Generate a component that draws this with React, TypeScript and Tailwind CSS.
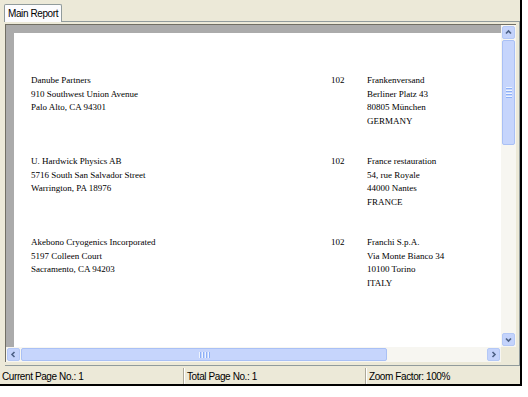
import React from "react";

type Entry = { left: string[]; num: string; right: string[] };

const entries: Entry[] = [
  {
    left: ["Danube Partners", "910 Southwest Union Avenue", "Palo Alto, CA  94301"],
    num: "102",
    right: ["Frankenversand", "Berliner Platz 43", "80805 München", "GERMANY"],
  },
  {
    left: ["U. Hardwick Physics AB", "5716 South San Salvador Street", "Warrington, PA  18976"],
    num: "102",
    right: ["France restauration", "54, rue Royale", "44000 Nantes", "FRANCE"],
  },
  {
    left: ["Akebono Cryogenics Incorporated", "5197 Colleen Court", "Sacramento, CA  94203"],
    num: "102",
    right: ["Franchi S.p.A.", "Via Monte Bianco 34", "10100 Torino", "ITALY"],
  },
];

function Arrow({ dir }: { dir: "up" | "down" | "left" | "right" }) {
  const pts = {
    up: "3,6.5 5.5,4 8,6.5",
    down: "3,4.5 5.5,7 8,4.5",
    left: "6.5,3 4,5.5 6.5,8",
    right: "4.5,3 7,5.5 4.5,8",
  }[dir];
  return (
    <div className="w-[13px] h-[13px] m-[1px] rounded-[2px] bg-[#C4D3FB] border border-[#B4C8F6] flex items-center justify-center">
      <svg width="11" height="11" viewBox="0 0 11 11">
        <polyline points={pts} fill="none" stroke="#4D6185" strokeWidth="1.6" />
      </svg>
    </div>
  );
}

function Grip({ vertical }: { vertical: boolean }) {
  return (
    <div className={vertical ? "flex flex-col gap-[1px]" : "flex gap-[1px]"}>
      {[0, 1, 2, 3].map((i) => (
        <div
          key={i}
          className={
            vertical
              ? "w-[6px] h-[1px] bg-[#EEF4FE] border-b border-[#8CB0F8] box-content"
              : "h-[6px] w-[1px] bg-[#EEF4FE] border-r border-[#8CB0F8] box-content"
          }
        />
      ))}
    </div>
  );
}

export default function App() {
  return (
    <div className="w-[528px] h-[397px] bg-white">
      <div className="w-[522px] h-[386px] bg-[#ECE9D8] border-r-2 border-b-2 border-black flex flex-col font-['Liberation_Sans',sans-serif] text-[10px] tracking-[-0.4px] text-black">
        {/* tab strip */}
        <div className="h-[21px] flex items-end pl-[4px] relative z-10">
          <div className="h-[18px] -mb-[1px] px-[3px] bg-[#FCFCFE] border border-b-0 border-[#919B9C] rounded-t-[2px] flex items-center">
            Main Report
          </div>
        </div>

        {/* tab page */}
        <div className="ml-[5px] w-[515px] border-t border-r border-b border-[#919B9C] pt-[2px] pb-[3px]">
          <div className="w-[511px] h-[338px] border-l border-t border-[#716F64] flex flex-col">
            <div className="flex h-[322px]">
              {/* report canvas */}
              <div className="w-[495px] h-[322px] bg-[#ABABAB] pl-[8px] pt-[8px] overflow-hidden">
                <div className="w-[600px] h-[420px] bg-white pl-[17px] pt-[41px] font-['Liberation_Serif',serif] text-[9px] leading-[13.5px] tracking-normal">
                  {entries.map((e, i) => (
                    <div key={i} className="flex h-[54px] mb-[27px]">
                      <div className="w-[300px]">
                        {e.left.map((l) => (
                          <div key={l} className="whitespace-nowrap">{l}</div>
                        ))}
                      </div>
                      <div className="w-[36px]">{e.num}</div>
                      <div>
                        {e.right.map((l) => (
                          <div key={l} className="whitespace-nowrap">{l}</div>
                        ))}
                      </div>
                    </div>
                  ))}
                </div>
              </div>

              {/* vertical scrollbar */}
              <div className="w-[15px] h-[322px] bg-[#F7F6F1] flex flex-col">
                <Arrow dir="up" />
                <div className="flex-1">
                  <div className="w-[13px] h-[105px] mx-[1px] rounded-[2px] bg-[#C6D5FC] border border-[#A9C0F5] flex items-center justify-center">
                    <Grip vertical />
                  </div>
                </div>
                <Arrow dir="down" />
              </div>
            </div>

            <div className="flex h-[15px]">
              {/* horizontal scrollbar */}
              <div className="w-[495px] h-[15px] bg-[#F7F6F1] flex">
                <Arrow dir="left" />
                <div className="flex-1">
                  <div className="w-[366px] h-[13px] my-[1px] rounded-[2px] bg-[#C6D5FC] border border-[#A9C0F5] flex items-center justify-center">
                    <Grip vertical={false} />
                  </div>
                </div>
                <Arrow dir="right" />
              </div>
              <div className="w-[15px] h-[15px] bg-[#ECE9D8]" />
            </div>
          </div>
        </div>

        {/* status bar */}
        <div className="h-[18px] flex items-center pt-[2px]">
          <div className="w-[183px] pl-[2px]">Current Page No.: 1</div>
          <div className="h-[16px] w-[2px] border-l border-[#ACA899] bg-white" />
          <div className="w-[180px] pl-[2px]">Total Page No.: 1</div>
          <div className="h-[16px] w-[2px] border-l border-[#ACA899] bg-white" />
          <div className="flex-1 pl-[2px]">Zoom Factor: 100%</div>
        </div>
      </div>
    </div>
  );
}
